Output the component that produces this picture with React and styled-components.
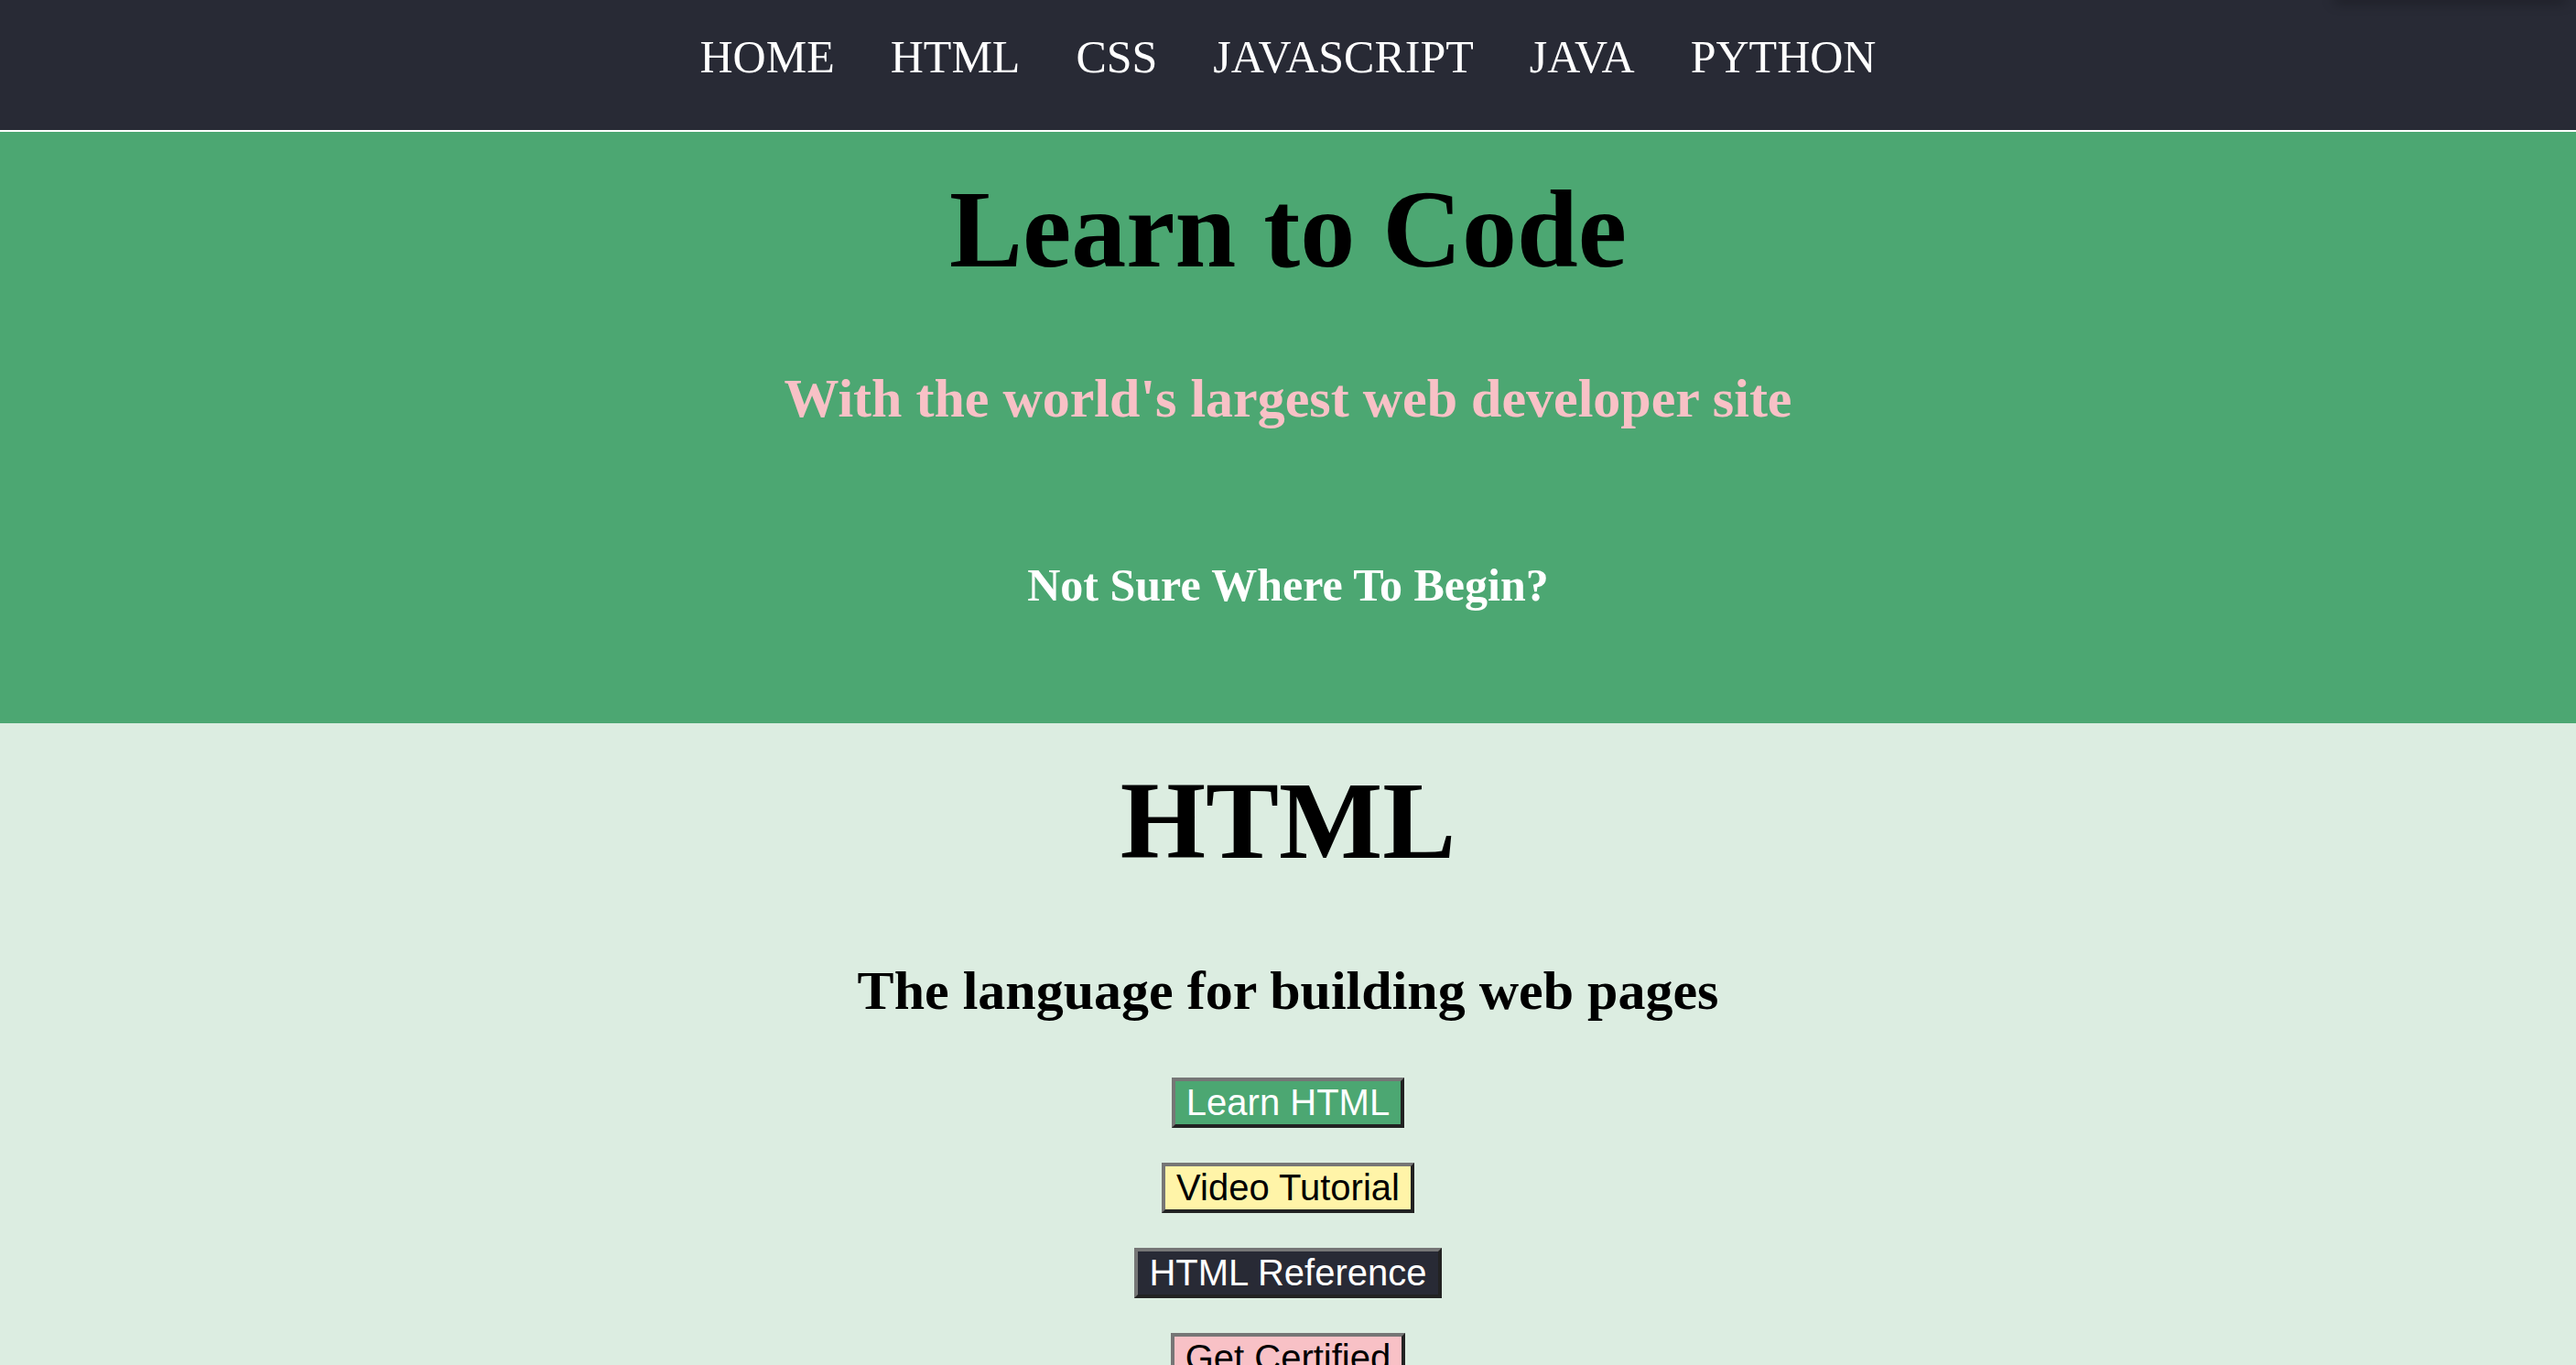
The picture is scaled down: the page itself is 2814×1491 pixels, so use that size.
import styled, { createGlobalStyle } from "styled-components";

const GlobalStyle = createGlobalStyle`
    html, body {
        margin: 0;
        padding: 0;
    }

    body {
        font-family: "Liberation Serif", "Times New Roman", serif;
        background-color: #dcede1;
    }
`

const links = ["HOME", "HTML", "CSS", "JAVASCRIPT", "JAVA", "PYTHON"];

const buttons = [
    { label: "Learn HTML", bg: "#4ca772", color: "#ffffff" },
    { label: "Video Tutorial", bg: "#fff4a8", color: "#000000" },
    { label: "HTML Reference", bg: "#282a35", color: "#ffffff" },
    { label: "Get Certified", bg: "#f8c1c6", color: "#000000" },
];

export default function App(){
    return(
        <>
            <GlobalStyle />
            <Page>
                <NavBar>
                    {links.map(link => (
                        <NavLink key={link} href="#">{link}</NavLink>
                    ))}
                    <Shadow />
                </NavBar>
                <Hero>
                    <Title>Learn to Code</Title>
                    <Tagline>With the world's largest web developer site</Tagline>
                    <Prompt>Not Sure Where To Begin?</Prompt>
                </Hero>
                <Topic>
                    <Title>HTML</Title>
                    <Subtitle>The language for building web pages</Subtitle>
                    <ButtonList>
                        {buttons.map(b => (
                            <Button key={b.label} bg={b.bg} color={b.color}>{b.label}</Button>
                        ))}
                    </ButtonList>
                </Topic>
            </Page>
        </>
    )
}

const Page = styled.div`
    display: flex;
    flex-direction: column;
    width: 100%;
    min-height: 1491px;
    background-color: #dcede1;
`

const NavBar = styled.nav`
    position: relative;
    display: flex;
    justify-content: center;
    align-items: flex-start;
    gap: 61px;
    box-sizing: border-box;
    height: 144px;
    padding-top: 33px;
    background-color: #282a35;
    border-bottom: 2px solid #ffffff;
`

const NavLink = styled.a`
    color: #ffffff;
    text-decoration: none;
    font-size: 50px;
    line-height: normal;
`

const Shadow = styled.div`
    position: absolute;
    top: -6px;
    right: 11px;
    width: 253px;
    height: 6px;
    background-color: #111218;
    box-shadow: 0 2px 14px rgba(0, 0, 0, 0.45);
`

const Hero = styled.header`
    display: flex;
    flex-direction: column;
    align-items: center;
    box-sizing: border-box;
    height: 646px;
    padding-top: 38px;
    background-color: #4ca772;
    text-align: center;
`

const Title = styled.h1`
    margin: 0;
    font-size: 120px;
    font-weight: 700;
    color: #000000;
    line-height: normal;
`

const Tagline = styled.h2`
    margin: 81px 0 0;
    font-size: 60px;
    font-weight: 700;
    color: #f8c1c6;
    line-height: normal;
`

const Prompt = styled.h3`
    margin: 140px 0 0;
    font-size: 50px;
    font-weight: 700;
    color: #ffffff;
    line-height: normal;
`

const Topic = styled.section`
    display: flex;
    flex-direction: column;
    align-items: center;
    padding-top: 38px;
    text-align: center;
`

const Subtitle = styled.h2`
    margin: 82px 0 0;
    font-size: 60px;
    font-weight: 700;
    color: #000000;
    line-height: normal;
`

const ButtonList = styled.div`
    display: flex;
    flex-direction: column;
    align-items: center;
    gap: 38px;
    margin-top: 60px;
`

const Button = styled.button`
    padding: 1px 12px;
    font-family: "Liberation Sans", Arial, sans-serif;
    font-size: 40px;
    line-height: normal;
    color: ${props => props.color};
    background-color: ${props => props.bg};
    border-width: 4px;
    border-style: solid;
    border-color: #767676 #222222 #222222 #767676;
    cursor: pointer;
`
